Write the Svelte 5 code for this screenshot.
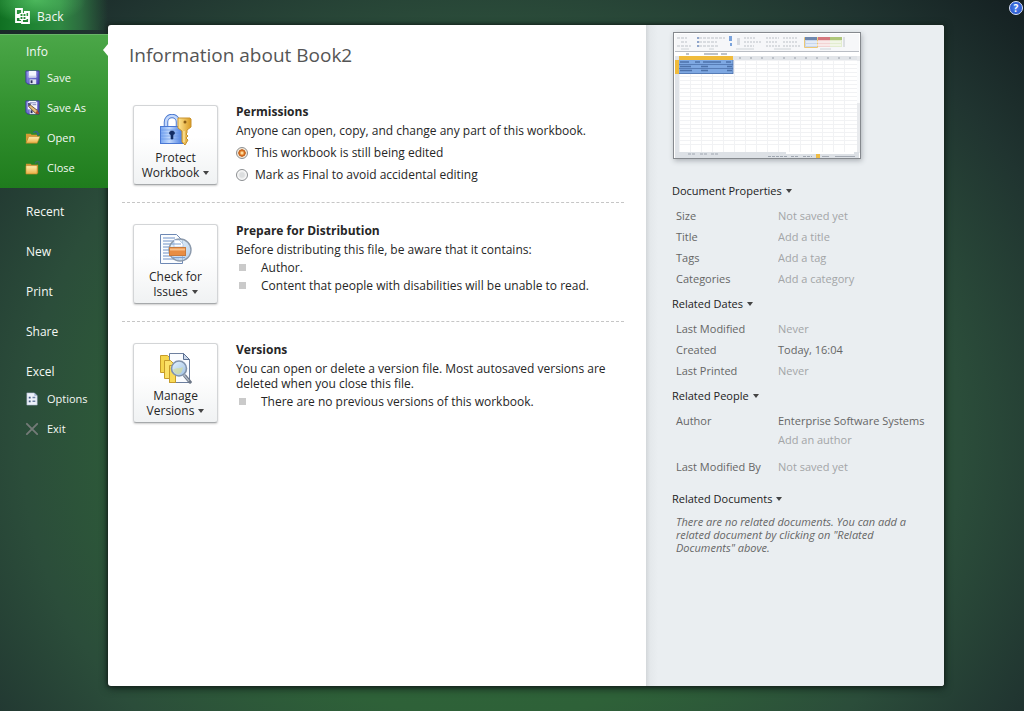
<script>
  const fileItems = ['Save', 'Save As', 'Open', 'Close']
  const pages = ['Recent', 'New', 'Print', 'Share']
  const appItems = ['Options', 'Exit']

  const docProps = [
    { label: 'Size', value: 'Not saved yet' },
    { label: 'Title', placeholder: 'Add a title' },
    { label: 'Tags', placeholder: 'Add a tag' },
    { label: 'Categories', placeholder: 'Add a category' }
  ]

  const dates = [
    { label: 'Last Modified', value: 'Never' },
    { label: 'Created', value: 'Today, 16:04', known: true },
    { label: 'Last Printed', value: 'Never' }
  ]

  const sheetCols = Array.from({ length: 16 }, (_, i) => 6 + i * 11)
  const sheetRows = Array.from({ length: 22 }, (_, i) => 28 + i * 4)

  let editState = $state('editing')
</script>

{#snippet icon(name)}
  <svg class="icon" viewBox="0 0 16 16" aria-hidden="true">
    {#if name === 'Save' || name === 'Save As'}
      <path d="M1 1h14v14H3l-2-2z" fill="url(#disk)" stroke="#3b3a9c" />
      <path d="M4 1h8v7H4z" fill="#f4f6ff" />
      <path d="M4 6h8v2H4z" fill="#cfd5ee" />
      <path d="M5 10h7v5H5z" fill="#dfe2f2" />
      <path d="M6 11h2v3H6z" fill="#292a5c" />
      {#if name === 'Save As'}
        <path d="M3 2h10v8H3z" fill="#f4f6ff" />
        <path d="M5 3h7M8 5h4" stroke="#7a80b8" />
        <path d="M4 4l9 7 2 4-4-1-7-7z" fill="#e6bf7b" stroke="#5b4530" stroke-width=".9" />
        <path d="M3 3l4 1-3 3z" fill="#474c78" />
        <path d="M13 11l2 4-4-1z" fill="#b0452e" />
      {/if}
    {:else if name === 'Open'}
      <path d="M1 4h5l1 1h6v4H3l-2 5z" fill="#d79b34" />
      <path d="M4 7h12l-3 7H1z" fill="url(#folder)" stroke="#b97f22" stroke-width=".6" />
      <path d="M9 3c2-2 4-2 5 1" fill="none" stroke="#31658a" stroke-width="1.5" />
      <path d="M12 4l4-1-2 3z" fill="#31658a" />
    {:else if name === 'Close'}
      <path d="M1 4h5l1 1h7v9H1z" fill="#cf9433" />
      <path d="M1 6h12v9H1z" fill="url(#folder)" stroke="#b97f22" stroke-width=".6" />
      <path d="M11 4c0-2 2-3 4-2v3" fill="none" stroke="#376b62" stroke-width="1.5" />
    {:else if name === 'Options'}
      <path d="M2 2h8l3 3v10H2z" fill="#eef2fa" stroke="#a5b3cc" stroke-width=".6" />
      <path d="M10 2v3h3z" fill="#9fb1d2" />
      <path d="M4 6h2v2H4zM4 10h2v2H4z" fill="#42597f" />
      <path d="M8 7h3M8 11h3" stroke="#6c80a3" stroke-width="1.5" />
    {:else}
      <path d="M2 3l11 11M13 3L2 14" stroke="#747b78" stroke-width="2" stroke-linecap="round" />
    {/if}
  </svg>
{/snippet}

{#snippet heading(text)}
  <h3><button class="plain">{text}<span class="caret"></span></button></h3>
{/snippet}

<svg class="defs" aria-hidden="true">
  <defs>
    <linearGradient id="disk" x2="1" y2="1">
      <stop stop-color="#9a9ff0" />
      <stop offset="1" stop-color="#4541b0" />
    </linearGradient>
    <linearGradient id="folder" x2="0" y2="1">
      <stop stop-color="#fff0b0" />
      <stop offset="1" stop-color="#eab045" />
    </linearGradient>
    <linearGradient id="lock" x2="1" y2="0">
      <stop stop-color="#78a6f2" />
      <stop offset=".4" stop-color="#c3dafc" />
      <stop offset="1" stop-color="#4a7de0" />
    </linearGradient>
    <linearGradient id="key" x2="1" y2="0">
      <stop stop-color="#ffe694" />
      <stop offset="1" stop-color="#d99a22" />
    </linearGradient>
    <linearGradient id="lens" x2="1" y2="1">
      <stop stop-color="#e6f4ff" />
      <stop offset="1" stop-color="#9dbfe2" />
    </linearGradient>
  </defs>
</svg>

<div class="backstage">
  <nav class="sidebar">
    <button class="back">
      <svg class="logo" viewBox="0 0 16 16" aria-hidden="true">
        <g fill="none" stroke="#fff">
          <path d="M7 5V1H1v6h4M9 4h5v5h-3M5 9H1v5h5M11 10h3v5H7v-3" stroke-width="1.8" />
          <path d="M5 5.500h6v6H5zM8 5.500v6M5 8.500h6" stroke-width="1.100" />
        </g>
      </svg>
      Back
    </button>

    <div class="file-group">
      <button class="page current">Info</button>
      {#each fileItems as item}
        <button class="command">{@render icon(item)}{item}</button>
      {/each}
    </div>

    <div class="pages">
      {#each pages as page}
        <button class="page">{page}</button>
      {/each}
      <div class="page app-name">Excel</div>
      {#each appItems as item}
        <button class="command">{@render icon(item)}{item}</button>
      {/each}
    </div>
  </nav>

  <div class="panel">
    <main>
      <h1>Information about Book2</h1>

      <section>
        <button class="tile">
          <svg viewBox="0 0 32 32" aria-hidden="true">
            <path d="M6 13V8a6 6 0 0 1 12 0v5" fill="none" stroke="#4a78cf" stroke-width="4.500" />
            <path d="M6 13V8a6 6 0 0 1 12 0v5" fill="none" stroke="#c3d8fb" stroke-width="2.600" />
            <rect x=".5" y="12.500" width="22" height="17" fill="url(#lock)" stroke="#4a78d4" />
            <path d="M1 16h21M1 19h21M1 22h21M1 25h21" stroke="#5f8fe6" stroke-opacity=".6" />
            <path d="M12 17a2 2 0 0 1 1 4v4h-2v-4a2 2 0 0 1 1-4z" fill="#122c63" stroke="#122c63" stroke-width=".6" />
            <path d="M18 4h12l1 1v8l-4 3v3l-1 1 2 2-2 2 2 2-3 5-3-3V17l-4-3V5z" fill="url(#key)" stroke="#c8922e" />
            <circle cx="25" cy="8" r="1.500" fill="#8a5d16" />
            <path d="M24 17v11" stroke="#fff0b4" />
          </svg>
          <span>Protect<br />Workbook<span class="caret"></span></span>
        </button>
        <div class="body">
          <h2>Permissions</h2>
          <p>Anyone can open, copy, and change any part of this workbook.</p>
          <label><input type="radio" value="editing" bind:group={editState} />This workbook is still being edited</label>
          <label><input type="radio" value="final" bind:group={editState} />Mark as Final to avoid accidental editing</label>
        </div>
      </section>

      <section>
        <button class="tile">
          <svg viewBox="0 0 32 32" aria-hidden="true">
            <path d="M.5 1.500h16l6 6v23H.5z" fill="#fbfdff" stroke="#6d88b4" />
            <path d="M3 5h12M3 8h12M3 11h10M3 14h8M3 17h6M3 20h8M3 23h11M3 26h16" stroke="#6f91c8" />
            <circle cx="20" cy="17" r="11" fill="url(#lens)" fill-opacity=".75" stroke="#8b99ab" stroke-width="1.400" />
            <path d="M14 7h5l4 4v3h-9z" fill="#fff" stroke="#9ab4d8" stroke-width=".6" />
            <path d="M12 11h9M13 24.500h12" stroke="#7fa0d0" />
            <rect x="9.500" y="14.500" width="16" height="8" fill="#e88d43" stroke="#c97a3c" />
            <path d="M10 16.500h15" stroke="#f9be85" stroke-width="2" />
          </svg>
          <span>Check for<br />Issues<span class="caret"></span></span>
        </button>
        <div class="body">
          <h2>Prepare for Distribution</h2>
          <p>Before distributing this file, be aware that it contains:</p>
          <ul>
            <li>Author.</li>
            <li>Content that people with disabilities will be unable to read.</li>
          </ul>
        </div>
      </section>

      <section>
        <button class="tile">
          <svg viewBox="0 0 32 32" aria-hidden="true">
            <path d="M.5 3.500h7l4 4v13H.5z" fill="#f6d64d" stroke="#c79c2a" />
            <path d="M9.500 1.500h14l6 6v23h-20z" fill="#fafcff" stroke="#6d7f9e" />
            <path d="M23.500 1.500v6h6z" fill="#cad7ea" stroke="#5b6f92" />
            <path d="M4.500 8.500h6l3 3v15h-9z" fill="#fbe168" stroke="#c79c2a" />
            <path d="M9.500 13.500h6v17h-6z" fill="#f9db58" stroke="#c79c2a" />
            <path d="M25 24l5 6" stroke="#6c7686" stroke-width="3.500" stroke-linecap="round" />
            <path d="M24 23l5 6" stroke="#b3bdca" stroke-width="1.200" />
            <circle cx="19" cy="16.500" r="7.500" fill="url(#lens)" stroke="#8193ac" stroke-width="1.600" />
            <path d="M13 18c4-3 7-1 10-3-1 5-2 7-5 7s-4-2-5-4z" fill="#d6dc8c" fill-opacity=".6" />
          </svg>
          <span>Manage<br />Versions<span class="caret"></span></span>
        </button>
        <div class="body">
          <h2>Versions</h2>
          <p>You can open or delete a version file. Most autosaved versions are deleted when you close this file.</p>
          <ul>
            <li>There are no previous versions of this workbook.</li>
          </ul>
        </div>
      </section>
    </main>

    <aside>
      <svg class="preview" viewBox="0 0 188 127" role="img" aria-label="Workbook preview">
        <rect width="188" height="127" fill="#fff" />
        <path d="M2 2h184v17H2z" fill="#f6f7f9" />
        <g stroke="#a9afb8" stroke-opacity=".5" stroke-width="1.500">
          <path d="M4 6h10M8 10h6M4 14h14M26 6h26M26 10h18M26 14h20" stroke-dasharray="3 1" />
          <path d="M71 6h12M71 10h18M71 14h10M93 6h13M93 10h11M93 14h14M110 6h14M110 10h14M110 14h18" stroke-dasharray="2 1" />
          <path d="M8 17h8M36 17h5M63 17h18M101 17h17M147 17h11" stroke-width="1" />
        </g>
        <path d="M24 5h2v2h-2zM24 9h2v2h-2zM24 13h2v2h-2z" fill="#8fa5cb" />
        <path d="M56 4h3v5h-3zM57 11h2v3h-2z" fill="#7ba4dc" />
        <path d="M64 6h3v7h-3z" fill="#d6dae0" />
        <path d="M131.500 5.500h13v10h-13z" fill="#c8d7ee" stroke="#ecc877" />
        <path d="M132 5h12v3h-12z" fill="#6f88ae" />
        <path d="M145 5h12v10h-12z" fill="#f3d3d3" />
        <path d="M145 5h12v3h-12z" fill="#d4777d" />
        <path d="M157 5h12v10h-12z" fill="#e3edcf" />
        <path d="M157 5h12v3h-12z" fill="#aec67a" />
        <path d="M133 10h35M133 13h35" stroke="#fff" />
        <path d="M171 5v10" stroke="#dcdfe3" stroke-width="2" />
        <path d="M2 19.500h184" stroke="#b9bdc4" />
        <path d="M13 22h3M31 22h14M48 22h6" stroke="#abb0b8" stroke-width="1.500" />
        <path d="M2 24h184v4H2z" fill="#e2e5e9" />
        <path d="M2 28h4v92H2z" fill="#dfe3e8" />
        <g stroke="#f1f2f4">
          {#each sheetCols as x}
            <path d={`M${x + 0.5} 28v92`} />
          {/each}
          {#each sheetRows as y}
            <path d={`M6 ${y + 0.5}h178`} />
          {/each}
        </g>
        <path d="M66 26h118" stroke="#bcc1c8" stroke-width="2" stroke-dasharray="2 9" />
        <path d="M6 24h54v4H6zM2 28h4v14H2z" fill="#f0bb3c" />
        <path d="M6 28h54v14H6z" fill="#7ea8e2" />
        <path d="M6 32.500h54M6 36.500h54M6 41.500h54M60 28v14" stroke="#4d72ac" stroke-opacity=".8" />
        <path d="M7 30h9M22 30h5M30 30h18M53 30h5M7 34.500h11M28 34.500h7M54 34.500h5M7 38.500h12M28 38.500h7M54 38.500h5" stroke="#2d4f86" stroke-width="1.500" stroke-opacity=".6" />
        <path d="M184 24h3v97h-3z" fill="#e9ebee" />
        <path d="M184 29h3v42h-3z" fill="#fbfcfd" />
        <path d="M2 120h184v6H2z" fill="#dde1e6" />
        <path d="M15 122h8M27 122h7M38 122h7M95 124.500h19M118 124.500h8M130 124.500h9" stroke="#9fa6b0" stroke-dasharray="3 1" />
        <path d="M113 121h68" stroke="#fff" stroke-width="2" />
        <path d="M143 122h4v4h-4z" fill="#efbc45" />
        <path d="M149 124.500h7M162 124.500h20" stroke="#a5abb4" />
        <rect x=".5" y=".5" width="187" height="126" fill="none" stroke="#85898e" />
      </svg>

      {@render heading('Document Properties')}
      <dl>
        {#each docProps as prop}
          <div class="prop">
            <dt>
              {#if prop.placeholder}
                <label for={`prop-${prop.label}`}>{prop.label}</label>
              {:else}
                {prop.label}
              {/if}
            </dt>
            <dd>
              {#if prop.placeholder}
                <input id={`prop-${prop.label}`} type="text" placeholder={prop.placeholder} />
              {:else}
                {prop.value}
              {/if}
            </dd>
          </div>
        {/each}
      </dl>

      {@render heading('Related Dates')}
      <dl>
        {#each dates as date}
          <div class="prop">
            <dt>{date.label}</dt>
            <dd class:known={date.known}>{date.value}</dd>
          </div>
        {/each}
      </dl>

      {@render heading('Related People')}
      <dl class="people">
        <div class="prop">
          <dt>Author</dt>
          <dd class="known">
            Enterprise Software Systems
            <input type="text" placeholder="Add an author" aria-label="Add an author" />
          </dd>
        </div>
        <div class="prop">
          <dt>Last Modified By</dt>
          <dd>Not saved yet</dd>
        </div>
      </dl>

      {@render heading('Related Documents')}
      <p class="note">
        There are no related documents. You can add a related document by clicking on "Related Documents" above.
      </p>
    </aside>
  </div>

  <div class="edge">
    <button class="help" aria-label="Help">?</button>
  </div>
</div>

<style>
  :global(body) {
    margin: 0;
    background: #14211f;
  }

  .backstage {
    display: flex;
    min-height: 100vh;
    box-sizing: border-box;
    background: radial-gradient(ellipse 62% 78% at 48% 62%, #2f6a39 0%, #2e6138 50%, #2b4d3a 74%, #203430 96%, #10181c 122%);
    font-family: 'Open Sans', 'Noto Sans', sans-serif;
    font-size: 12px;
    color: #262626;
  }

  button,
  input {
    font: inherit;
    color: inherit;
  }

  button {
    border: 0;
    padding: 0;
    background: none;
    cursor: pointer;
  }

  .defs {
    position: absolute;
    width: 0;
    height: 0;
  }

  .sidebar {
    width: 108px;
    flex: none;
    color: #f4f8f4;
  }

  .sidebar button {
    display: flex;
    align-items: center;
    width: 100%;
    text-align: left;
  }

  .sidebar .back {
    gap: 6px;
    height: 30px;
    margin-bottom: 4px;
    padding: 2px 0 0 15px;
    background:
      radial-gradient(ellipse 50px 24px at 36px 0, #62d070aa, transparent),
      linear-gradient(90deg, #107022 0%, #1f8433 30%, #2f8a42 55%, #2c6b3f 75%, transparent 100%);
  }

  .logo {
    width: 16px;
    height: 16px;
  }

  .file-group {
    position: relative;
    padding-bottom: 5px;
    border-top: 1px solid #69b568;
    background: linear-gradient(#4ba748, #349331 45%, #1f7c1d);
  }

  .file-group::after {
    content: '';
    position: absolute;
    top: 9px;
    right: 0;
    border: 6px solid transparent;
    border-left: 0;
    border-right: 5px solid #fff;
  }

  .page {
    box-sizing: border-box;
    height: 40px;
    padding: 0 0 0 26px;
    line-height: 40px;
  }

  .sidebar .current {
    height: 28px;
    padding-top: 6px;
  }

  .sidebar .command {
    gap: 7px;
    height: 30px;
    padding: 0 0 2px 25px;
    font-size: 11px;
  }

  .icon {
    width: 15px;
    height: 15px;
  }

  .pages {
    padding-top: 4px;
  }

  .app-name {
    height: 32px;
  }

  .panel {
    display: flex;
    flex: 1;
    min-width: 0;
    margin: 25px 0;
    border-radius: 3px;
    background: #fff;
    box-shadow: 0 0 3px 1px #182720, 0 2px 8px #10201a;
    overflow: hidden;
  }

  main {
    flex: 1;
    min-width: 0;
    padding: 16px 22px 24px 14px;
  }

  h1 {
    margin: 0 0 15px;
    padding-left: 7px;
    font-size: 19px;
    font-weight: 400;
    line-height: 28px;
    color: #555;
  }

  section {
    display: flex;
    gap: 18px;
    padding: 21px 0 17px 11px;
    border-bottom: 1px dashed #c6c6c6;
  }

  section:last-child {
    border-bottom: 0;
  }

  .tile {
    display: flex;
    flex-direction: column;
    align-items: center;
    gap: 4px;
    flex: none;
    box-sizing: border-box;
    width: 85px;
    height: 80px;
    padding-top: 8px;
    border: 1px solid #d3d5d7;
    border-bottom-color: #a6a9ab;
    border-radius: 3px;
    background: linear-gradient(#fff 40%, #f0f2f3);
    box-shadow: 0 1px 2px #cfcfcf;
    line-height: 15px;
  }

  .tile svg {
    width: 32px;
    height: 32px;
  }

  .caret {
    display: inline-block;
    margin-left: 4px;
    border: 3px solid transparent;
    border-top: 4px solid #444;
    border-bottom: 0;
    vertical-align: 2px;
  }

  .body {
    flex: 1;
    min-width: 0;
    height: 80px;
    line-height: 15px;
  }

  h2 {
    margin: -1px 0 3px;
    font-size: 12px;
    line-height: 16px;
  }

  p {
    margin: 0;
  }

  .body p {
    max-width: 372px;
  }

  .body label {
    display: flex;
    align-items: center;
    gap: 7px;
    height: 15px;
    margin-top: 7px;
  }

  input[type='radio'] {
    appearance: none;
    width: 12px;
    height: 12px;
    margin: 0;
    border: 1px solid #8b8e91;
    border-radius: 50%;
    background: radial-gradient(#dcdedf 30%, #f8f8f8 60%);
  }

  input[type='radio']:checked {
    background: radial-gradient(circle, #ffdc9c 10%, #d9701c 35%, #b85a1a 48%, #f6ead8 56%);
  }

  ul {
    margin: 0;
    padding: 0;
    list-style: none;
  }

  li {
    display: flex;
    align-items: center;
    gap: 15px;
    margin: 3px 0 0 3px;
  }

  li::before {
    content: '';
    width: 7px;
    height: 7px;
    background: #cacaca;
  }

  aside {
    flex: none;
    box-sizing: border-box;
    width: 298px;
    padding: 7px 12px 20px 26px;
    background: linear-gradient(90deg, #d3d7da, #e4e8eb 4px, #eaeef1 12px);
    font-size: 11px;
    line-height: 15px;
    color: #666;
  }

  .preview {
    display: block;
    width: 188px;
    height: 127px;
    margin: 0 0 24px 1px;
    box-shadow: 1px 2px 5px #aeb3b8;
  }

  h3 {
    margin: 0;
    font-size: 11px;
    font-weight: 400;
    line-height: 16px;
    color: #222;
  }

  .plain {
    display: block;
  }

  dl {
    margin: 6px 0 7px 4px;
  }

  .prop {
    display: flex;
    min-height: 21px;
    line-height: 21px;
  }

  dt {
    flex: none;
    width: 102px;
  }

  dd {
    flex: 1;
    min-width: 0;
    margin: 0;
    color: #a3a5a7;
  }

  dd.known {
    color: #666;
  }

  input[type='text'] {
    display: block;
    box-sizing: border-box;
    width: 100%;
    height: 21px;
    border: 0;
    padding: 0;
    background: none;
  }

  input::placeholder {
    color: #a3a5a7;
    opacity: 1;
  }

  .people {
    margin-bottom: 14px;
  }

  .people .prop + .prop {
    margin-top: 9px;
  }

  .people input[type='text'] {
    height: 16px;
  }

  .note {
    max-width: 236px;
    margin: 8px 0 0 4px;
    font-style: italic;
    line-height: 13px;
  }

  .edge {
    display: flex;
    justify-content: flex-end;
    align-items: flex-start;
    flex: none;
    width: 80px;
    padding: 1px 1px 0 0;
    box-sizing: border-box;
  }

  .help {
    width: 14px;
    height: 14px;
    border: 1px solid #dce6ff;
    border-radius: 50%;
    background: radial-gradient(#4f83f0, #1d49c0);
    color: #fff;
    font-size: 10px;
    font-weight: 700;
    line-height: 12px;
  }
</style>
